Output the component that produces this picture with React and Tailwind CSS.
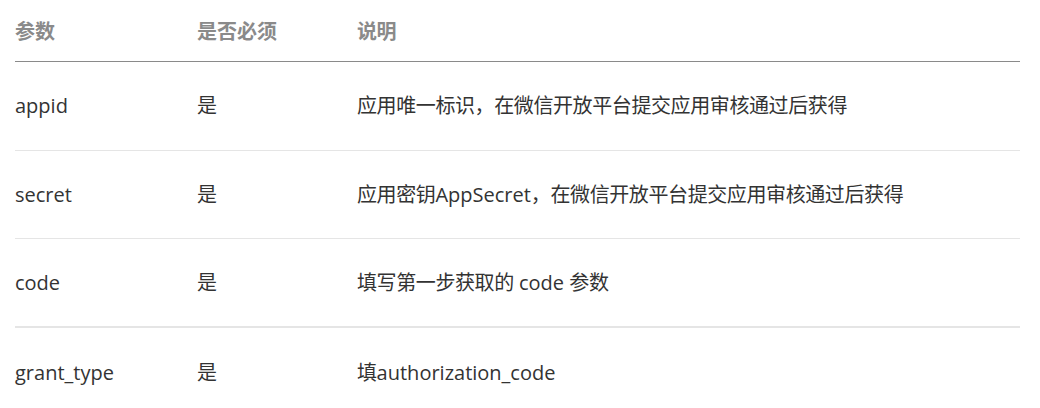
const rows = [
  { name: "appid", required: "是", desc: "应用唯一标识，在微信开放平台提交应用审核通过后获得", h: "h-[89px]" },
  { name: "secret", required: "是", desc: "应用密钥AppSecret，在微信开放平台提交应用审核通过后获得", h: "h-[88px]" },
  { name: "code", required: "是", desc: "填写第一步获取的 code 参数", h: "h-[89px] border-b-2" },
  { name: "grant_type", required: "是", desc: "填authorization_code", h: "h-[89px] border-b-0" },
];

// CJK glyphs run a touch narrower in the original, tighten only those runs
function Desc({ text }) {
  const parts = text.split(/([\u3000-\u9fff\uff00-\uffef]+)/).filter(Boolean);
  return parts.map((p, i) =>
    /[\u3000-\u9fff\uff00-\uffef]/.test(p) ? (
      <span key={i} className="tracking-[-0.4px]">{p}</span>
    ) : (
      <span key={i}>{p}</span>
    )
  );
}

export default function App() {
  return (
    <div className="bg-white w-[1040px] h-[408px] overflow-hidden font-['Open_Sans','Noto_Sans_CJK_SC',sans-serif] text-[20px]">
      <div className="ml-[15px] w-[1005px]">
        <div className="flex items-center h-[62px] pt-[3px] border-b border-[#8a8a8a] font-bold text-[#8a8a8a]">
          <div className="w-[182px]">参数</div>
          <div className="w-[160px]">是否必须</div>
          <div className="flex-1 tracking-[-0.4px]">说明</div>
        </div>
        {rows.map((r) => (
          <div
            key={r.name}
            className={`flex items-center border-b border-[#e5e5e5] text-[#333] ${r.h}`}
          >
            <div className="w-[182px]">{r.name}</div>
            <div className="w-[160px]">{r.required}</div>
            <div className="flex-1">
              <Desc text={r.desc} />
            </div>
          </div>
        ))}
      </div>
    </div>
  );
}
